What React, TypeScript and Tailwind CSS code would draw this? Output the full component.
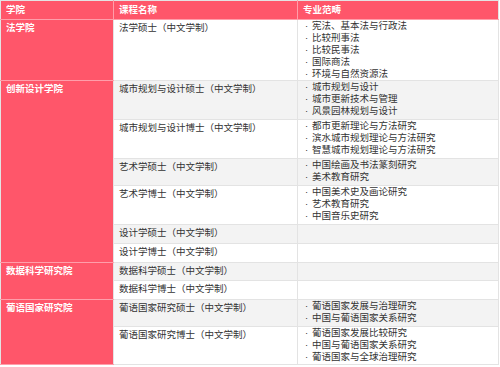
type Course = { name: string; items: string[]; h: string };
type School = { school: string; courses: Course[] };

const data: School[] = [
  {
    school: '法学院',
    courses: [
      {
        name: '法学硕士（中文学制）',
        items: ['宪法、基本法与行政法', '比较刑事法', '比较民事法', '国际商法', '环境与自然资源法'],
        h: 'h-[61px]',
      },
    ],
  },
  {
    school: '创新设计学院',
    courses: [
      { name: '城市规划与设计硕士（中文学制）', items: ['城市规划与设计', '城市更新技术与管理', '风景园林规划与设计'], h: 'h-[39px]' },
      { name: '城市规划与设计博士（中文学制）', items: ['都市更新理论与方法研究', '滨水城市规划理论与方法研究', '智慧城市规划理论与方法研究'], h: 'h-[39px]' },
      { name: '艺术学硕士（中文学制）', items: ['中国绘画及书法篆刻研究', '美术教育研究'], h: 'h-[27px]' },
      { name: '艺术学博士（中文学制）', items: ['中国美术史及画论研究', '艺术教育研究', '中国音乐史研究'], h: 'h-[39px]' },
      { name: '设计学硕士（中文学制）', items: [], h: 'h-[19px]' },
      { name: '设计学博士（中文学制）', items: [], h: 'h-[19px]' },
    ],
  },
  {
    school: '数据科学研究院',
    courses: [
      { name: '数据科学硕士（中文学制）', items: [], h: 'h-[18px]' },
      { name: '数据科学博士（中文学制）', items: [], h: 'h-[19px]' },
    ],
  },
  {
    school: '葡语国家研究院',
    courses: [
      { name: '葡语国家研究硕士（中文学制）', items: ['葡语国家发展与治理研究', '中国与葡语国家关系研究'], h: 'h-[27px]' },
      { name: '葡语国家研究博士（中文学制）', items: ['葡语国家发展比较研究', '中国与葡语国家关系研究', '葡语国家与全球治理研究'], h: 'h-[38px]' },
    ],
  },
];

export default function App() {
  let idx = 0;
  return (
    <div className="w-[500px] h-[367px] bg-white font-['Liberation_Sans','Noto_Sans_CJK_SC',sans-serif] text-[9.5px] leading-[12px] text-[#333]">
      <table className="w-[498px] table-fixed border-collapse border border-[#e3e3e3]">
        <colgroup>
          <col className="w-[113px]" />
          <col className="w-[184px]" />
          <col className="w-[201px]" />
        </colgroup>
        <thead>
          <tr className="h-[19px] bg-[#ff566a] text-white font-bold">
            <th className="text-left px-[5px] border-r border-b border-[#ff9eaa]">学院</th>
            <th className="text-left px-[5px] border-r border-b border-[#ff9eaa]">课程名称</th>
            <th className="text-left px-[5px] border-b border-[#ff9eaa]">专业范畴</th>
          </tr>
        </thead>
        <tbody>
          {data.map((s) =>
            s.courses.map((c, i) => {
              const stripe = idx++ % 2 === 1 ? 'bg-[#f3f3f3]' : 'bg-white';
              return (
                <tr key={c.name} className={c.h}>
                  {i === 0 && (
                    <td
                      rowSpan={s.courses.length}
                      className="align-top bg-[#ff566a] text-white font-bold px-[5px] pt-[2px] border-b border-[#ff9eaa]"
                    >
                      {s.school}
                    </td>
                  )}
                  <td className={`align-top px-[5px] pt-[2px] border border-[#e3e3e3] ${stripe}`}>{c.name}</td>
                  <td className={`align-top pl-[4px] pt-0 border border-[#e3e3e3] ${stripe}`}>
                    {c.items.map((t) => (
                      <div
                        key={t}
                        className="pl-[10px] relative before:content-['·'] before:absolute before:left-0 before:w-[9px] before:text-center"
                      >
                        {t}
                      </div>
                    ))}
                  </td>
                </tr>
              );
            })
          )}
        </tbody>
      </table>
    </div>
  );
}
